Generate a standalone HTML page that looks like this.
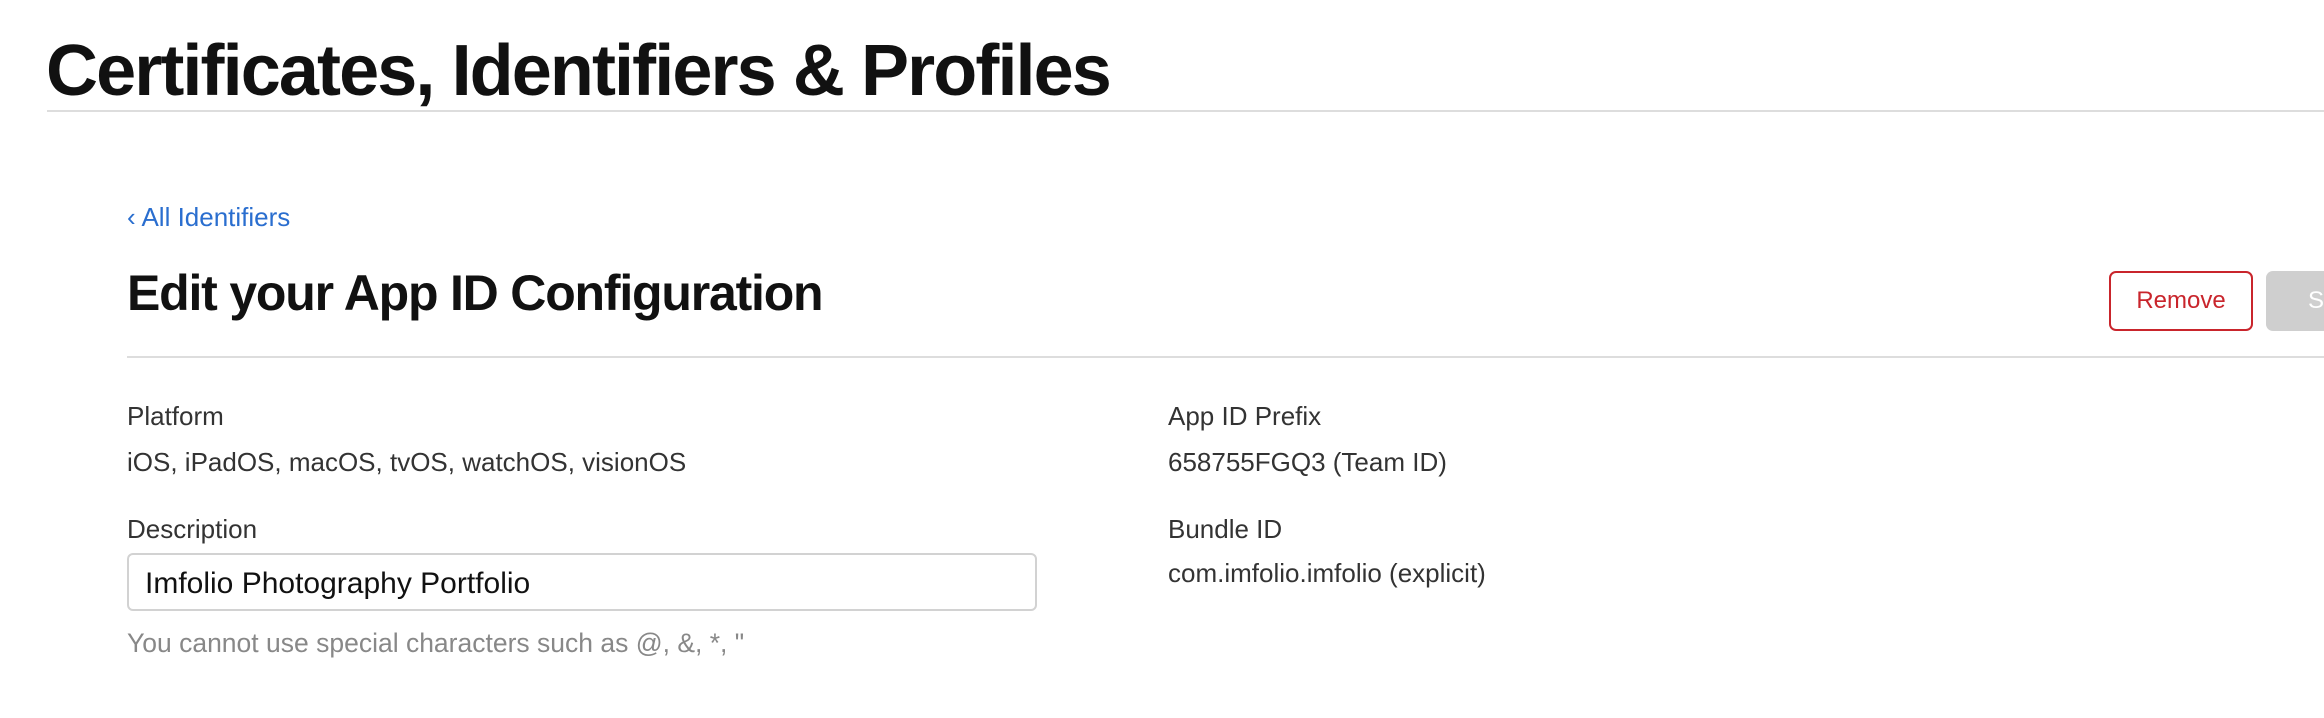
<!DOCTYPE html>
<html><head><meta charset="utf-8"><style>
html,body{margin:0;padding:0;background:#fff;}
body{width:2324px;height:718px;position:relative;overflow:hidden;font-family:"Liberation Sans",Arial,sans-serif;}
.a{position:absolute;white-space:nowrap;}
.t{font-size:26px;line-height:30px;color:#333;}
</style></head><body>
<div class="a" style="left:46px;top:31px;font-size:72px;line-height:80px;font-weight:bold;color:#111;letter-spacing:-1.9px;">Certificates, Identifiers &amp; Profiles</div>
<div class="a" style="left:47px;top:110px;width:2277px;height:2px;background:#ddd;"></div>
<div class="a" style="left:127px;top:202px;font-size:26px;line-height:30px;color:#2a6ecf;">‹ All Identifiers</div>
<div class="a" style="left:127px;top:263px;font-size:50px;line-height:60px;font-weight:bold;color:#111;letter-spacing:-1.2px;">Edit your App ID Configuration</div>
<div class="a" style="left:2109px;top:271px;width:140px;height:56px;border:2px solid #c9252c;border-radius:7px;color:#c9252c;font-size:24px;line-height:56px;text-align:center;">Remove</div>
<div class="a" style="left:2266px;top:271px;width:80px;height:60px;background:#cfcfcf;border-radius:7px;color:#fff;font-size:24px;line-height:60px;padding-left:42px;box-sizing:border-box;">S</div>
<div class="a" style="left:127px;top:356px;width:2197px;height:2px;background:#ddd;"></div>
<div class="a t" style="left:127px;top:401px;">Platform</div>
<div class="a t" style="left:127px;top:447px;">iOS, iPadOS, macOS, tvOS, watchOS, visionOS</div>
<div class="a t" style="left:127px;top:514px;">Description</div>
<div class="a" style="left:127px;top:553px;width:910px;height:58px;border:2px solid #d2d2d2;border-radius:6px;box-sizing:border-box;"></div>
<div class="a" style="left:145px;top:567px;font-size:30px;line-height:34px;color:#111;">Imfolio Photography Portfolio</div>
<div class="a" style="left:127px;top:628px;font-size:26.5px;line-height:30px;color:#888;">You cannot use special characters such as @, &amp;, *, "</div>
<div class="a t" style="left:1168px;top:401px;">App ID Prefix</div>
<div class="a t" style="left:1168px;top:447px;">658755FGQ3 (Team ID)</div>
<div class="a t" style="left:1168px;top:514px;">Bundle ID</div>
<div class="a t" style="left:1168px;top:558px;">com.imfolio.imfolio (explicit)</div>
</body></html>
